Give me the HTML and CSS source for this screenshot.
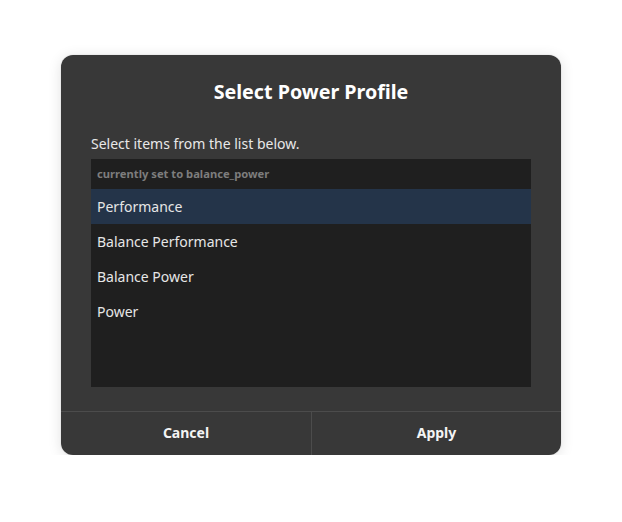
FILE: index.html
```html
<!DOCTYPE html>
<html>
<head>
<meta charset="utf-8">
<link rel="stylesheet" href="styles.css">
</head>
<body>
<div class="dialog">
  <div class="content">
    <div class="title">Select Power Profile</div>
    <div class="label">Select items from the list below.</div>
    <div class="list">
      <div class="list-header">currently set to balance_power</div>
      <div class="row selected">Performance</div>
      <div class="row">Balance Performance</div>
      <div class="row">Balance Power</div>
      <div class="row">Power</div>
    </div>
  </div>
  <div class="actions">
    <div class="btn">Cancel</div>
    <div class="btn btn-right">Apply</div>
  </div>
</div>
</body>
</html>
```
FILE: styles.css
```css
html, body {
  margin: 0;
  padding: 0;
  background: #ffffff;
}
body {
  padding-top: 55px;
  font-family: "Noto Sans", "Open Sans", sans-serif;
}
.dialog {
  width: 500px;
  height: 400px;
  margin: 0 auto;
  background: #383838;
  border-radius: 12px;
  box-shadow: 0 2px 14px rgba(0, 0, 0, 0.12), 0 0 0 1px rgba(0, 0, 0, 0.03);
  display: flex;
  flex-direction: column;
  overflow: hidden;
}
.content {
  height: 356px;
  box-sizing: border-box;
  padding: 24px 30px 24px;
  display: flex;
  flex-direction: column;
}
.title {
  font-size: 19.7px;
  font-weight: 700;
  line-height: 25px;
  text-align: center;
  color: #ffffff;
}
.label {
  margin-top: 30px;
  font-size: 14px;
  line-height: 20px;
  color: #e8e8e8;
}
.list {
  margin-top: 5px;
  height: 228px;
  background: #1f1f1f;
}
.list-header {
  height: 30px;
  line-height: 30px;
  padding-left: 6px;
  font-size: 11.2px;
  font-weight: 700;
  color: #7d7d7d;
}
.row {
  height: 35px;
  line-height: 35px;
  padding-left: 6px;
  font-size: 14px;
  color: #e6e6e6;
}
.row.selected {
  background: #243449;
}
.actions {
  flex: 1;
  border-top: 1px solid #4c4c4c;
  display: grid;
  grid-template-columns: 250px 1fr;
}
.btn {
  display: flex;
  align-items: center;
  justify-content: center;
  padding-bottom: 3px;
  font-size: 14px;
  font-weight: 700;
  color: #f4f4f4;
}
.btn-right {
  border-left: 1px solid #4c4c4c;
}
```
